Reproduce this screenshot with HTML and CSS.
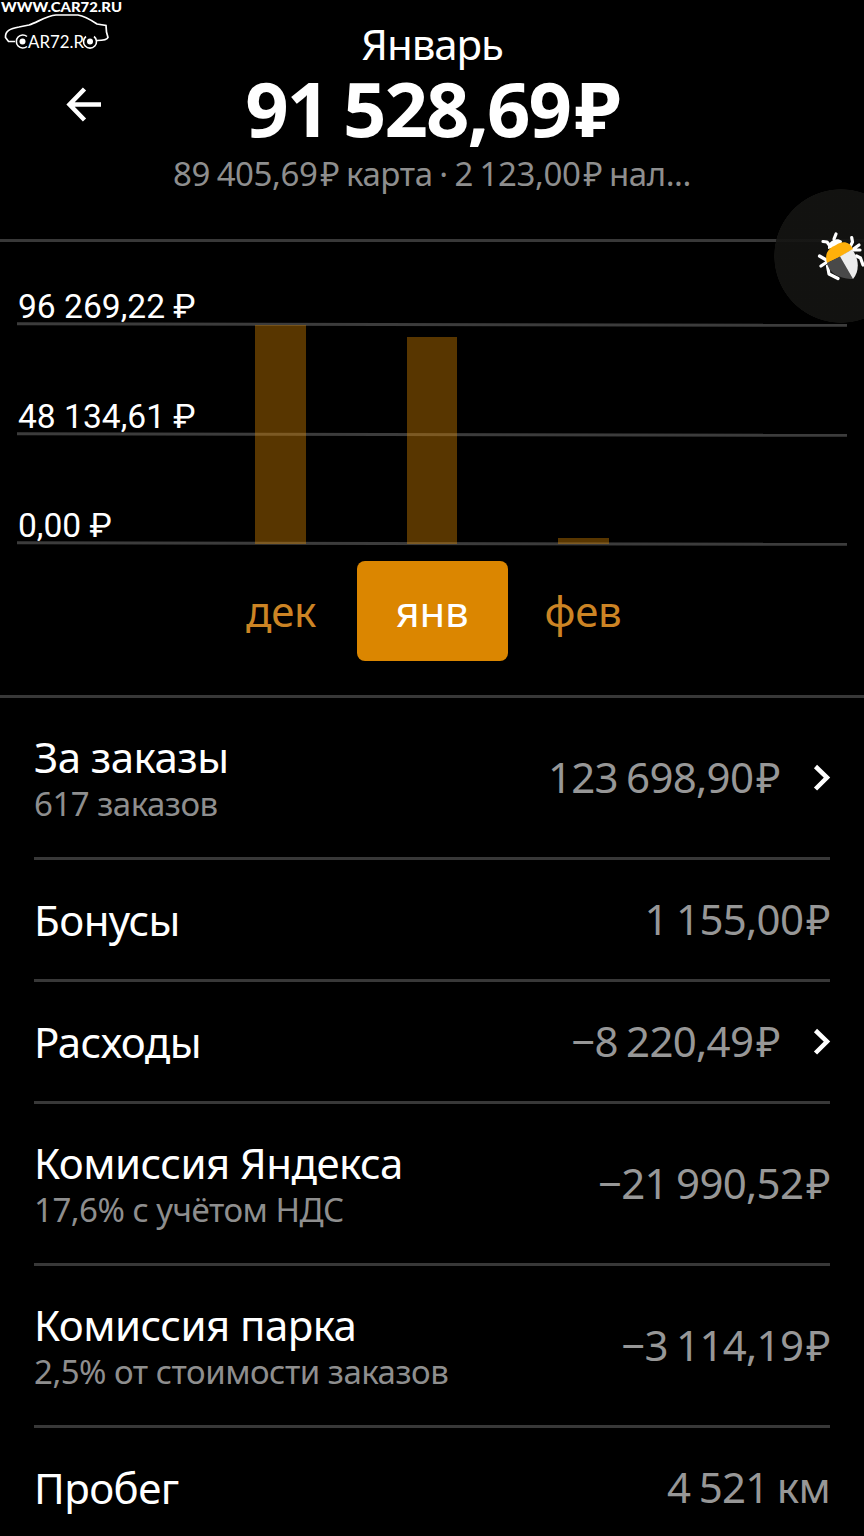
FILE: index.html
```
<!DOCTYPE html>
<html lang="ru">
<head>
  <meta charset="UTF-8" />
  <title>Январь</title>
  <link rel="stylesheet" href="styles.css">
</head>
<body>
  <header class="header">
    <button class="back" aria-label="Назад">
      <svg width="36" height="36" viewBox="0 0 36 36" fill="none" stroke="#fff" stroke-width="4.500">
        <path d="M36 18.500H5M19.500 3L4.500 18.500L19.500 34" />
      </svg>
    </button>
    <div class="month-title">Январь</div>
    <h1 class="total">91 528,69<span class="rub">₽</span></h1>
    <div class="split">89 405,69<span class="rub">₽</span> карта · 2 123,00<span class="rub">₽</span> нал...</div>
  </header>

  <section class="chart">
    <div class="scale">
      <div class="scale-row"><span>96 269,22 ₽</span></div>
      <div class="scale-row"><span>48 134,61 ₽</span></div>
      <div class="scale-row"><span>0,00 ₽</span></div>
    </div>
    <div class="bars">
      <div class="bar" style="height: 219px"></div>
      <div class="bar" style="height: 207px"></div>
      <div class="bar" style="height: 6px"></div>
    </div>
    <nav class="months">
      <a class="month">дек</a>
      <a class="month active">янв</a>
      <a class="month">фев</a>
    </nav>
  </section>

  <main class="list">
    <div class="row tall">
      <div class="label">
        <div class="name">За заказы</div>
        <div class="note">617 заказов</div>
      </div>
      <div class="amount">123 698,90<span class="rub">₽</span></div>
      <svg class="chevron" width="18" height="28" viewBox="0 0 18 28" fill="none" stroke="#fff" stroke-width="4.500">
        <path d="M2.500 2.500L14 13.500L2.500 25" />
      </svg>
    </div>
    <div class="row">
      <div class="label">
        <div class="name">Бонусы</div>
      </div>
      <div class="amount">1 155,00<span class="rub">₽</span></div>
    </div>
    <div class="row">
      <div class="label">
        <div class="name">Расходы</div>
      </div>
      <div class="amount">−8 220,49<span class="rub">₽</span></div>
      <svg class="chevron" width="18" height="28" viewBox="0 0 18 28" fill="none" stroke="#fff" stroke-width="4.500">
        <path d="M2.500 2.500L14 13.500L2.500 25" />
      </svg>
    </div>
    <div class="row tall">
      <div class="label">
        <div class="name">Комиссия Яндекса</div>
        <div class="note">17,6% с учётом НДС</div>
      </div>
      <div class="amount">−21 990,52<span class="rub">₽</span></div>
    </div>
    <div class="row tall">
      <div class="label">
        <div class="name">Комиссия парка</div>
        <div class="note">2,5% от стоимости заказов</div>
      </div>
      <div class="amount">−3 114,19<span class="rub">₽</span></div>
    </div>
    <div class="row">
      <div class="label">
        <div class="name">Пробег</div>
      </div>
      <div class="amount">4 521 км</div>
    </div>
  </main>

  <!-- site watermark -->
  <svg class="watermark" width="126" height="52" viewBox="0 0 126 52">
    <text class="wm-url" x="1" y="11.500" textLength="121" lengthAdjust="spacingAndGlyphs">WWW.CAR72.RU</text>
    <path d="M15 41.500H8.500L5.500 37.500C5 31 10 28.500 19 27L29 25C38 22 46 16 56 15H78C85 16 91 20 97 24L106 25.500L106.500 32L108 37.500C107 40 103 40.500 97 40.500" fill="none" stroke="#fff" stroke-width="1.700" />
    <path d="M27 36.500A6.500 6.500 0 1 0 27 46.500" fill="none" stroke="#fff" stroke-width="1.600" />
    <path d="M86 36.500A6.500 6.500 0 1 0 94 36.500" fill="none" stroke="#fff" stroke-width="1.600" />
    <circle cx="22.500" cy="41.500" r="3" fill="#fff" />
    <circle cx="90" cy="41.500" r="3" fill="#fff" />
    <text class="wm-name" x="28" y="47.500" textLength="56" lengthAdjust="spacingAndGlyphs">AR72.R</text>
  </svg>

  <!-- bug report bubble -->
  <div class="bug">
    <svg width="52" height="56" viewBox="0 0 52 56" fill="none">
      <g stroke="#fff" stroke-width="3.200" stroke-linecap="round" stroke-linejoin="round">
        <path d="M11 13.500L15 14L18 18M24 6L22 11" />
        <path d="M39.700 9.500L40.500 14L38 19M47 17L40 22H48" />
        <path d="M7.500 28L13.500 31.500M9 38L15 34" />
        <path d="M15.500 38L17 46L26 50.500M44.500 28L48.500 30L51 37" />
      </g>
      <path d="M16 21C15 14 24 8 30 13L29 18Z" fill="#fff" />
      <path d="M15 35C12 25 17 20 24 17C31 12 38 14 41 21L28 29Z" fill="#ffb00a" />
      <path d="M15 35L28 28.500L41 51C29 51 17 46 15 35Z" fill="#494949" />
      <path d="M28 28.500L40 21.500C47 30 48 43 41 51Z" fill="#ececec" />
    </svg>
  </div>
</body>
</html>
```
FILE: styles.css
```
* {
  box-sizing: border-box;
}

body {
  position: relative;
  margin: 0;
  height: 1536px;
  overflow: hidden;
  background-color: #000;
  color: #fff;
  font-family: "Noto Sans", sans-serif;
}

/* header */
.header {
  height: 242px;
  padding-top: 19px;
  border-bottom: 3px solid #383838;
  text-align: center;
}

.back {
  position: absolute;
  left: 65px;
  top: 86px;
  padding: 0;
  border: none;
  background: none;
  line-height: 0;
}

.month-title {
  height: 50px;
  font-size: 42px;
  line-height: 50px;
  letter-spacing: -1.1px;
}

.total {
  margin: 0;
  height: 80px;
  font-size: 76px;
  font-weight: 700;
  line-height: 77px;
  letter-spacing: -2px;
  word-spacing: -3px;
}

.total .rub {
  margin-left: 5px;
}

.split {
  height: 50px;
  color: #8e8e8e;
  font-size: 33px;
  line-height: 50px;
  letter-spacing: -0.4px;
  word-spacing: -1.5px;
}

.rub {
  margin-left: 3px;
}

/* chart */
.chart {
  position: relative;
  height: 456px;
  padding: 0 17px;
  border-bottom: 3px solid #383838;
}

.scale {
  padding-top: 36px;
}

.scale-row {
  height: 109.5px;
  font-family: Roboto, sans-serif;
  font-size: 33.6px;
  line-height: 57px;
}

.scale-row span {
  display: block;
  height: 45px;
  padding-left: 1px;
}

.scale-row::after {
  content: "";
  display: block;
  height: 2.5px;
  background-color: #3c3c3c;
  transform: rotate(0.12deg);
}

.bars {
  position: absolute;
  left: 205px;
  top: 83px;
  width: 454px;
  height: 219px;
  display: flex;
  align-items: flex-end;
  justify-content: space-around;
}

.bar {
  width: 50.5px;
  background-color: rgba(219, 134, 0, 0.4);
}

.months {
  display: flex;
  justify-content: center;
  margin-top: -46px;
}

.month {
  width: 151px;
  height: 100px;
  border-radius: 8px;
  color: #cc8424;
  font-size: 42px;
  line-height: 100px;
  letter-spacing: -0.3px;
  text-align: center;
}

.month.active {
  background-color: #db8600;
  color: #fff;
}

/* list */
.list {
  padding: 0 34px;
}

.row {
  display: flex;
  align-items: center;
  height: 122px;
  border-bottom: 3px solid #383838;
}

.row.tall {
  height: 162px;
}

.row:last-child {
  border-bottom: none;
  height: 119px;
}

.label {
  flex: 1;
}

.tall .label {
  padding-top: 3px;
}

.name {
  font-size: 42px;
  line-height: 50px;
  letter-spacing: -0.55px;
}

.note {
  color: #8e8e8e;
  font-size: 33px;
  line-height: 44px;
  letter-spacing: -0.5px;
}

.amount {
  padding-bottom: 2px;
  color: #979797;
  font-size: 42px;
  letter-spacing: -0.7px;
  word-spacing: -2px;
}

.chevron {
  margin-left: 33px;
  margin-right: -1px;
}

/* overlays */
.watermark {
  position: absolute;
  left: 0;
  top: 0;
  fill: #fff;
}

.wm-url {
  font-family: Lato, sans-serif;
  font-size: 14px;
  font-weight: 900;
}

.wm-name {
  font-family: Lato, sans-serif;
  font-size: 16.5px;
}

/* circle runs off the right edge of the screen */
.bug {
  position: absolute;
  right: 0;
  top: 189px;
  width: 90px;
  height: 134px;
  padding: 39px 0 0 38px;
  background: radial-gradient(circle at 67px 67px, rgba(20, 20, 18, 0.9) 66.5px, transparent 67px);
}
```
